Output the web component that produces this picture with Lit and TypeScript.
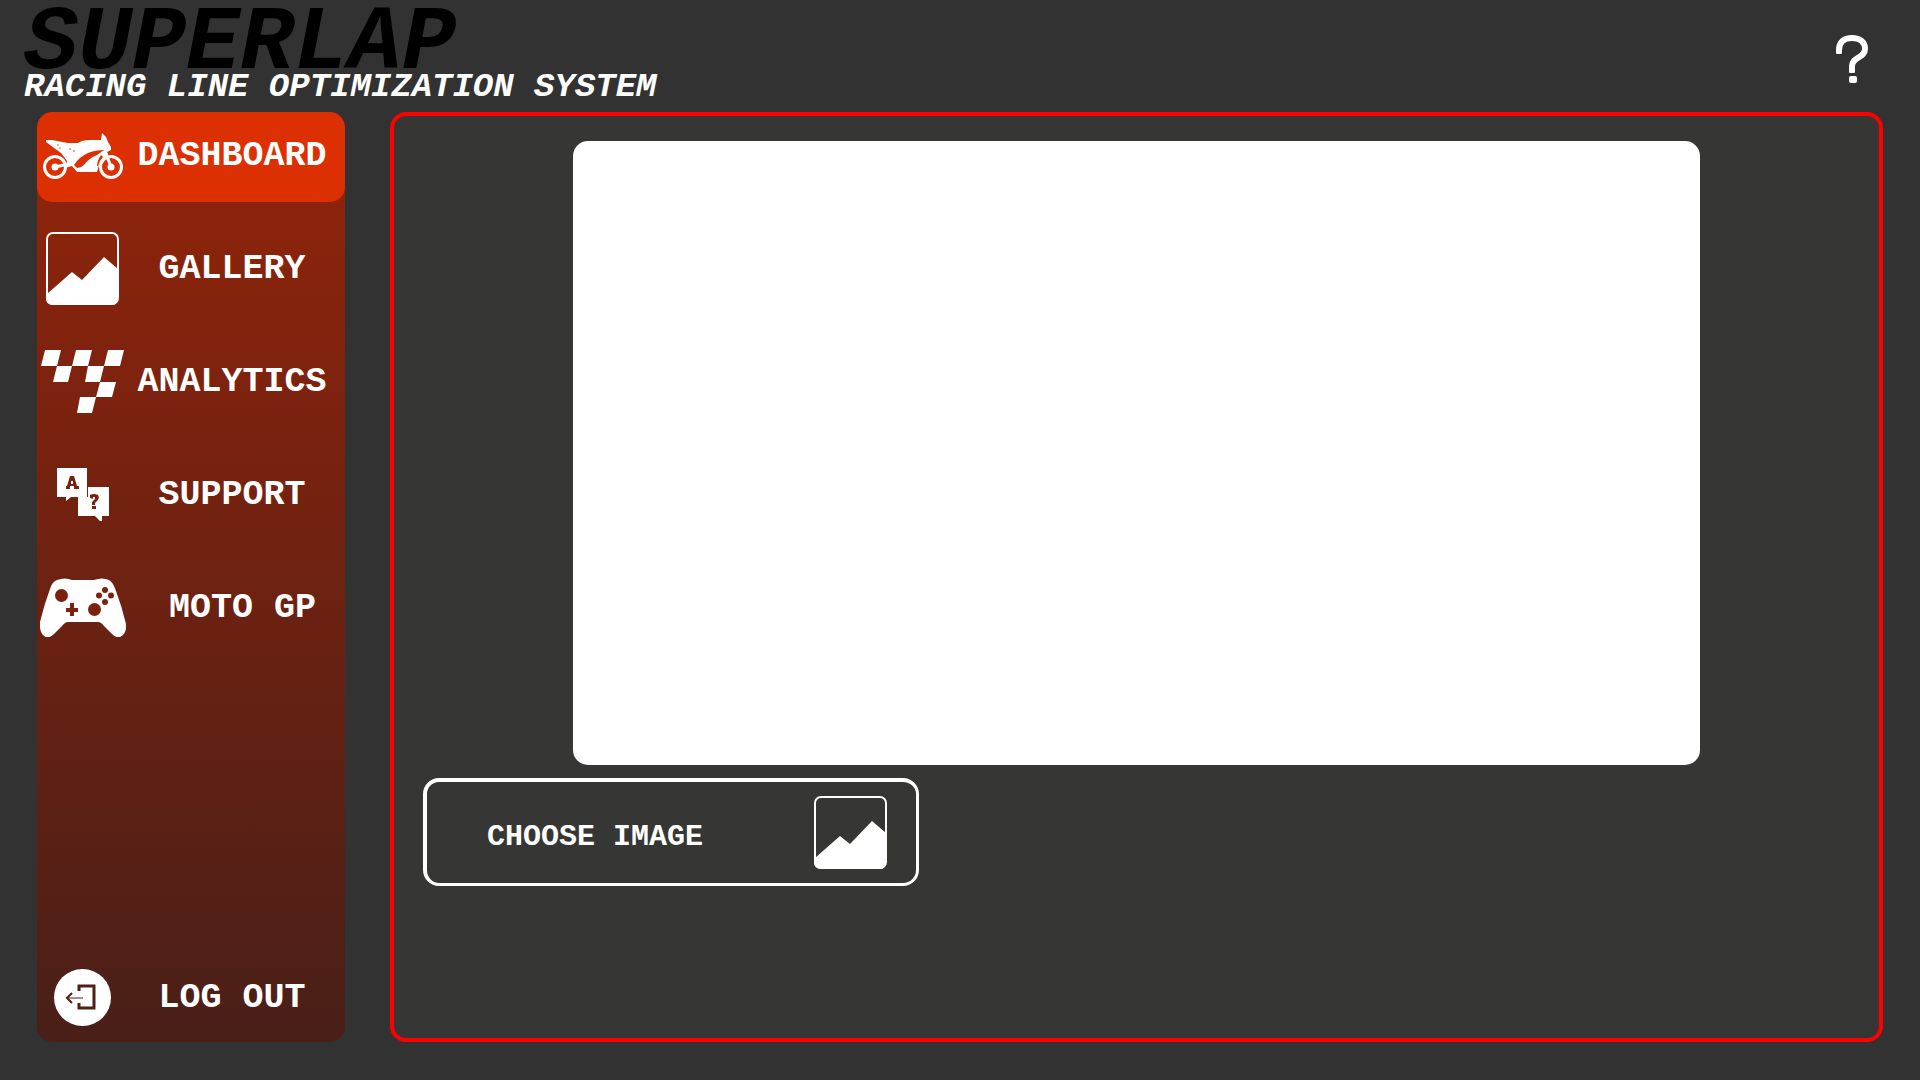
import { LitElement, html, css, svg } from "lit";
import { customElement, property, state } from "lit/decorators.js";

const picture = svg`
  <svg class="icon" width="74" height="74" viewBox="0 0 74 74" aria-hidden="true">
    <rect x="1" y="1" width="71" height="71" rx="6" fill="none" stroke="currentColor" stroke-width="2"/>
    <path fill="currentColor" d="M1 62 26 40 36 48 58 25 72 37V66Q72 73 66 73H7Q0 73 0 66Z"/>
  </svg>`;

const bike = svg`
  <svg class="icon" width="80" height="46" viewBox="0 0 80 46" aria-hidden="true">
    <g fill="none" stroke="currentColor">
      <circle cx="12" cy="34" r="10.5" stroke-width="3"/>
      <circle cx="68" cy="34" r="10.5" stroke-width="3"/>
      <path d="M12 34 26 31M62 18 68 34" stroke-width="3"/>
    </g>
    <g fill="currentColor">
      <circle cx="12" cy="34" r="3.5"/>
      <circle cx="68" cy="34" r="3.5"/>
      <path d="M3 7H9L25 10H35Q39 7 47 7H58L59 0 63 4 65 9 68 14V17L64 19 66 24Q57 26 56 32L54 39H34L29 33 22 35 24 28 18 20 3 9Z"/>
    </g>
    <path class="cut" d="M31 32Q36 24 45 20 52 17 61 17L54 22Q46 25 41 32 38 35 34 35Z"/>
    <path class="cut" d="M58 22 60 24Q56 28 55 33L54 33Q54 28 58 22Z"/>
    <g class="cut"><circle cx="15" cy="12" r="0.7"/><circle cx="17" cy="15" r="0.7"/><circle cx="27" cy="16" r="0.8"/><circle cx="31" cy="18" r="0.8"/></g>
  </svg>`;

const flag = svg`
  <svg class="icon" width="83" height="63" viewBox="0 0 83 63" aria-hidden="true">
    <path fill="currentColor" d="M4 0H20L16 16H0ZM35 0H51L47 16H31ZM67 0H83L79 16H63ZM16 16H31L27 32H12ZM47 16H63L59 32H44ZM59 32H75L71 47H55ZM39 47H55L51 63H36Z"/>
  </svg>`;

const questions = svg`
  <svg class="icon" width="52" height="53" viewBox="0 0 52 53" aria-hidden="true">
    <path fill="currentColor" d="M0 0H30V19H52V48H45V53H43L38 48H21V29H14L9 33V29H0Z"/>
    <path class="cut" d="M30 19H31V29H30Z"/>
    <path class="cut" fill-rule="evenodd" d="M13 8H17L20 18H22V21H17V18H13V21H9V18H10ZM14 13V16H16V13Z"/>
    <path class="cut" d="M33 30V27Q37 25 41 27 43 30 40 33L38 35V37H35V34L38 31V29H36V31ZM35 38H39V41H35Z"/>
  </svg>`;

const gamepad = svg`
  <svg class="icon" width="86" height="59" viewBox="0 0 86 59" aria-hidden="true">
    <path fill="currentColor" d="M17 2Q25-1 32 2H54Q62-1 69 2 73 4 76 13 82 29 86 46 87 56 80 59 76 60 72 56L64 48Q61 44 58 44H28Q25 44 22 48L14 56Q10 60 6 59-1 56 0 44 4 27 10 11 12 4 17 2Z"/>
    <g class="cut">
      <circle cx="21.5" cy="17.5" r="6.5"/><circle cx="54.5" cy="31.5" r="6.5"/>
      <circle cx="65" cy="12" r="3"/><circle cx="59" cy="17.5" r="3"/>
      <circle cx="71" cy="17.5" r="3"/><circle cx="65" cy="24" r="3"/>
      <path d="M30 25H34V30H38V34H34V38H30V34H26V30H30Z"/>
    </g>
  </svg>`;

const exit = svg`
  <svg class="icon" width="57" height="57" viewBox="0 0 57 57" aria-hidden="true">
    <circle cx="28.5" cy="28.5" r="28.5" fill="currentColor"/>
    <g class="line">
      <path d="M25 22V17H40V39H25V34" stroke-width="3"/>
      <path d="M29 29H13" stroke-width="1"/>
      <path d="M18 24 13 29 18 34" stroke-width="2"/>
    </g>
  </svg>`;

const help = svg`
  <svg width="32" height="48" viewBox="0 0 32 48" aria-hidden="true">
    <path fill="none" stroke="currentColor" stroke-width="6" stroke-linejoin="round" d="M3 18V15C3 7 8 3 16 3S29 7 29 14C29 23 16 22 16 31V36"/>
    <path fill="currentColor" d="M0 15H6V18Q6 19 5 19H1Q0 19 0 18ZM13 34H19V37Q19 38 18 38H14Q13 38 13 37Z"/>
    <rect x="13" y="41" width="8" height="7" rx="2" fill="currentColor"/>
  </svg>`;

const pages = [
  { id: "dashboard", label: "DASHBOARD", icon: bike },
  { id: "gallery", label: "GALLERY", icon: picture },
  { id: "analytics", label: "ANALYTICS", icon: flag },
  { id: "support", label: "SUPPORT", icon: questions },
  { id: "motogp", label: " MOTO GP", icon: gamepad },
];

@customElement("nav-bar")
class NavBar extends LitElement {
  @property() current = "dashboard";

  static styles = css`
    :host {
      display: flex;
      flex-direction: column;
      justify-content: space-between;
      border-radius: 15px;
      overflow: hidden;
      background: linear-gradient(#93240a, #491f18);
      color: #fff;
    }
    .list { display: grid; gap: 23px; }
    .item {
      --cut: #7d210f;
      display: grid;
      grid-template-columns: 91px 1fr;
      align-items: center;
      width: 100%;
      height: 90px;
      padding: 0 9px 3px 0;
      border: 0;
      border-radius: 15px;
      background: none;
      color: inherit;
      font: bold 35px/1 "Liberation Mono", monospace;
      white-space: pre;
      text-align: center;
      cursor: pointer;
    }
    .item.active { --cut: #dc3002; background: #dc3002; }
    .item.last { --cut: #4f1e16; padding-bottom: 0; }
    .item span { padding-top: 2px; }
    .icon { justify-self: center; }
    .cut { fill: var(--cut); stroke: none; }
    .line { fill: none; stroke: var(--cut); }
  `;

  private pick(id: string) {
    this.dispatchEvent(new CustomEvent("navigate", { detail: id }));
  }

  render() {
    return html`
      <nav class="list">
        ${pages.map(
          (p) => html`<button
            class="item ${p.id === this.current ? "active" : ""}"
            @click=${() => this.pick(p.id)}
          >${p.icon}<span>${p.label}</span></button>`
        )}
      </nav>
      <button class="item last">${exit}<span>LOG OUT</span></button>
    `;
  }
}

@customElement("app-root")
class AppRoot extends LitElement {
  @state() private current = "dashboard";

  static styles = css`
    :host {
      display: flex;
      flex-direction: column;
      box-sizing: border-box;
      min-height: 100vh;
      padding-bottom: 38px;
      background: #323232;
      color: #fff;
      font-family: "Liberation Mono", monospace;
      font-weight: bold;
    }
    .top {
      display: flex;
      justify-content: space-between;
      align-items: flex-start;
      height: 112px;
      box-sizing: border-box;
      padding: 14px 52px 0 24px;
    }
    .title {
      margin: 0;
      color: #000;
      font-size: 90px;
      font-style: italic;
      line-height: 60px;
    }
    .tagline {
      margin: 0;
      font-size: 34px;
      font-style: italic;
      line-height: 26px;
    }
    .help {
      display: flex;
      margin-top: 21px;
      padding: 0;
      border: 0;
      background: none;
      color: inherit;
      cursor: pointer;
    }
    .body {
      flex: 1;
      display: grid;
      grid-template-columns: 308px 1fr;
      gap: 45px;
      padding: 0 37px;
    }
    .panel {
      display: flex;
      flex-direction: column;
      align-items: flex-start;
      gap: 13px;
      padding: 25px 29px;
      border: 4px solid #f00;
      border-radius: 16px;
      background: #363634;
    }
    .preview {
      align-self: center;
      width: 79%;
      aspect-ratio: 1127 / 624;
      border-radius: 15px;
      background: #fff;
    }
    .choose {
      display: flex;
      justify-content: space-between;
      align-items: center;
      box-sizing: border-box;
      width: 496px;
      height: 108px;
      padding: 0 28px 0 60px;
      border: 4px solid #fff;
      border-bottom-width: 3px;
      border-right-width: 3px;
      border-radius: 16px;
      background: none;
      color: inherit;
      font: bold 30px/1 "Liberation Mono", monospace;
      cursor: pointer;
    }
    .choose span { padding-top: 8px; }
  `;

  render() {
    return html`
      <header class="top">
        <div>
          <h1 class="title">SUPERLAP</h1>
          <p class="tagline">RACING LINE OPTIMIZATION SYSTEM</p>
        </div>
        <button class="help" aria-label="Help">${help}</button>
      </header>
      <div class="body">
        <nav-bar
          .current=${this.current}
          @navigate=${(e: CustomEvent) => (this.current = e.detail)}
        ></nav-bar>
        <main class="panel">
          <div class="preview"></div>
          <button class="choose"><span>CHOOSE IMAGE</span>${picture}</button>
        </main>
      </div>
    `;
  }
}
